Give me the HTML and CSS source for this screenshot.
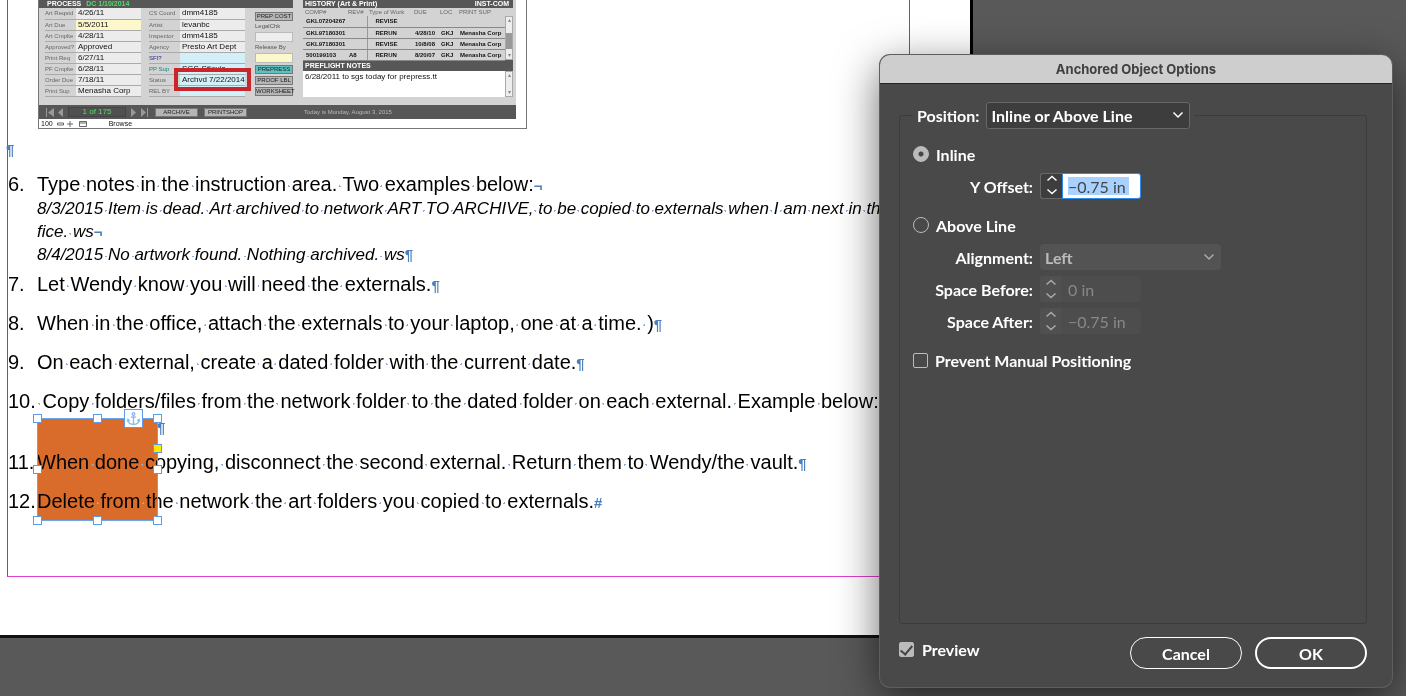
FILE: index.html
```
<!DOCTYPE html>
<html lang="en">
<head>
    <meta charset="utf-8">
    <title>Anchored Object Options</title>
    <link rel="stylesheet" href="styles.css">
</head>
<body>
    <main class="page">
        <div class="frame">
            <div class="shot">
                <div class="shot-main">
                    <div class="process">
                        <div class="bar">PROCESS <span class="green">DC 1/10/2014</span></div>
                        <div class="process-cols">
                            <table class="fields">
                                <tr><th>Art Reqstd</th><td>4/26/11</td></tr>
                                <tr><th>Art Due</th><td class="yellow">5/5/2011</td></tr>
                                <tr><th>Art Cmplte</th><td>4/28/11</td></tr>
                                <tr><th>Approved?</th><td>Approved</td></tr>
                                <tr><th>Print Req</th><td>6/27/11</td></tr>
                                <tr><th>PF Cmplte</th><td>6/28/11</td></tr>
                                <tr><th>Order Due</th><td>7/18/11</td></tr>
                                <tr><th>Print Sup</th><td>Menasha Corp</td></tr>
                            </table>
                            <table class="fields">
                                <tr><th>CS Coord</th><td>dmm4185</td></tr>
                                <tr><th>Artist</th><td>levanbc</td></tr>
                                <tr><th>Inspector</th><td>dmm4185</td></tr>
                                <tr><th>Agency</th><td>Presto Art Dept</td></tr>
                                <tr><th class="navy">SFI?</th><td class="blue"></td></tr>
                                <tr><th class="teal">PP Sup</th><td class="blue">SGS-Stlouis</td></tr>
                                <tr><th>Status</th><td class="blue marked">Archvd 7/22/2014</td></tr>
                                <tr><th>REL BY</th><td class="blue"></td></tr>
                            </table>
                            <div class="actions">
                                <button>PREP COST</button>
                                <label for="legal">LegalChk</label>
                                <input id="legal" type="text">
                                <label for="release">Release By</label>
                                <input id="release" class="yellow" type="text">
                                <button class="teal-btn">PREPRESS</button>
                                <button>PROOF LBL</button>
                                <button>WORKSHEET</button>
                            </div>
                        </div>
                    </div>
                    <div class="history">
                        <div class="bar spaced"><span>HISTORY (Art &amp; Print)</span><span>INST-COM</span></div>
                        <div class="scrolled">
                            <table class="jobs">
                                <thead>
                                    <tr><th class="c1">COMP#</th><th class="c2">REV#</th><th class="c3">Type of Work</th><th class="c4">DUE</th><th class="c5">LOC</th><th>PRINT SUP</th></tr>
                                </thead>
                                <tbody>
                                    <tr><td>GKL07204267</td><td></td><td>REVISE</td><td></td><td></td><td></td></tr>
                                    <tr><td>GKL97180301</td><td></td><td>RERUN</td><td>4/28/10</td><td>GKJ</td><td>Menasha Corp</td></tr>
                                    <tr><td>GKL97180301</td><td></td><td>REVISE</td><td>10/8/08</td><td>GKJ</td><td>Menasha Corp</td></tr>
                                    <tr><td>500199103</td><td>A8</td><td>RERUN</td><td>8/20/07</td><td>GKJ</td><td>Menasha Corp</td></tr>
                                </tbody>
                            </table>
                            <div class="scrollbar"><span>▴</span><b></b><span>▾</span></div>
                        </div>
                        <div class="bar">PREFLIGHT NOTES</div>
                        <div class="notes">
                            <p>6/28/2011 to sgs today for prepress.tt</p>
                            <div class="scrollbar"><span>▴</span><span>▾</span></div>
                        </div>
                    </div>
                </div>
                <div class="shot-nav">
                    <svg width="20" height="9" viewBox="0 0 20 9" fill="#999"><path d="M1 0h1v9H1zM9 0v9L3 4.500zM18 0v9l-5-4.500z"/></svg>
                    <span class="count">1 of 175</span>
                    <svg width="20" height="9" viewBox="0 0 20 9" fill="#999"><path d="M2 0v9l5-4.500zM12 0v9l5-4.500zM18 0h1v9h-1z"/></svg>
                    <button>ARCHIVE</button>
                    <button>PRINTSHOP</button>
                    <span class="today">Today is Monday, August 3, 2015</span>
                </div>
                <div class="shot-status">
                    <span>100</span>
                    <svg width="32" height="8" viewBox="0 0 32 8" fill="none" stroke="#666"><path d="M1.500 3h6v2h-6zM11 4h6M14 1v6M23.500 1.500h7v5h-7zM23.500 3h7"/></svg>
                    <span class="browse">Browse</span>
                </div>
            </div>

            <p class="blank"><span class="mark">¶</span></p>

            <ol class="steps">
                <li>
                    <span class="num">6.</span>
                    <div class="text">
                        <p>Type notes in the instruction area. Two examples below:<span class="mark">¬</span></p>
                        <p class="note">8/3/2015 Item is dead. Art archived to network ART TO ARCHIVE, to be copied to externals when I am next in the of</p>
                        <p class="note">fice. ws<span class="mark">¬</span></p>
                        <p class="note">8/4/2015 No artwork found. Nothing archived. ws<span class="mark">¶</span></p>
                    </div>
                </li>
                <li class="close">
                    <span class="num">7.</span>
                    <p class="text">Let Wendy know you will need the externals.<span class="mark">¶</span></p>
                </li>
                <li>
                    <span class="num">8.</span>
                    <p class="text">When in the office, attach the externals to your laptop, one at a time. )<span class="mark">¶</span></p>
                </li>
                <li>
                    <span class="num">9.</span>
                    <p class="text">On each external, create a dated folder with the current date.<span class="mark">¶</span></p>
                </li>
                <li>
                    <span class="num">10.</span>
                    <div class="text">
                        <p>&nbsp;Copy folders/files from the network folder to the dated folder on each external. Example below:&nbsp;</p>
                        <p class="after-object"><span class="mark">¶</span></p>
                        <div class="object"></div>
                        <div class="selection">
                            <i class="handle nw"></i><i class="handle n"></i><i class="handle ne"></i>
                            <i class="handle w"></i><i class="handle e"></i>
                            <i class="handle sw"></i><i class="handle s"></i><i class="handle se"></i>
                            <i class="handle corner"></i>
                            <svg class="anchor" viewBox="0 0 19 19" fill="none" stroke="#8ab8f0" stroke-width="1.500">
                                <circle cx="9.500" cy="4.500" r="1.500"/>
                                <path d="M9.500 6v10M6.500 8h6M3 11c.5 3.500 3 5 6.500 5s6-1.500 6.500-5M2.500 13l.8-2.500 2 1.500M16.500 13l-.8-2.500-2 1.500"/>
                            </svg>
                        </div>
                    </div>
                </li>
                <li>
                    <span class="num">11.</span>
                    <p class="text">When done copying, disconnect the second external. Return them to Wendy/the vault.<span class="mark">¶</span></p>
                </li>
                <li>
                    <span class="num">12.</span>
                    <p class="text">Delete from the network the art folders you copied to externals.<span class="mark">#</span></p>
                </li>
            </ol>
        </div>
    </main>

    <form class="dialog">
        <h1 class="title">Anchored Object Options</h1>
        <div class="dialog-body">
            <fieldset class="group">
                <legend>
                    <label for="position">Position:</label>
                    <span class="select">
                        <select id="position"><option>Inline or Above Line</option></select>
                        <svg width="12" height="8" viewBox="0 0 12 8"><path d="M1.500 1.500L6 6l4.500-4.500"/></svg>
                    </span>
                </legend>

                <div class="option"><input type="radio" id="inline" name="mode" checked><label for="inline">Inline</label></div>
                <div class="row">
                    <label for="offset">Y Offset:</label>
                    <span class="stepper active">
                        <button type="button" aria-label="Step Y Offset"><svg width="12" height="20" viewBox="0 0 12 20"><path d="M1.500 5.500L6 1.500l4.500 4M1.500 14.500l4.500 4 4.500-4"/></svg></button>
                        <input type="text" id="offset" value="−0.75 in">
                    </span>
                </div>

                <div class="option"><input type="radio" id="above" name="mode"><label for="above">Above Line</label></div>
                <div class="row">
                    <label for="align">Alignment:</label>
                    <span class="select off">
                        <select id="align" disabled><option>Left</option></select>
                        <svg width="12" height="8" viewBox="0 0 12 8"><path d="M1.500 1.500L6 6l4.500-4.500"/></svg>
                    </span>
                </div>
                <div class="row">
                    <label for="before">Space Before:</label>
                    <span class="stepper">
                        <button type="button" aria-label="Step Space Before" disabled><svg width="12" height="20" viewBox="0 0 12 20"><path d="M1.500 5.500L6 1.500l4.500 4M1.500 14.500l4.500 4 4.500-4"/></svg></button>
                        <input type="text" id="before" value="0 in" disabled>
                    </span>
                </div>
                <div class="row">
                    <label for="after">Space After:</label>
                    <span class="stepper">
                        <button type="button" aria-label="Step Space After" disabled><svg width="12" height="20" viewBox="0 0 12 20"><path d="M1.500 5.500L6 1.500l4.500 4M1.500 14.500l4.500 4 4.500-4"/></svg></button>
                        <input type="text" id="after" value="−0.75 in" disabled>
                    </span>
                </div>

                <div class="option"><input type="checkbox" id="prevent"><label for="prevent">Prevent Manual Positioning</label></div>
            </fieldset>

            <div class="footer">
                <div class="preview"><input type="checkbox" id="preview" checked><label for="preview">Preview</label></div>
                <button type="button" class="pill">Cancel</button>
                <button type="submit" class="pill ok">OK</button>
            </div>
        </div>
    </form>
    <script src="script.js"></script>
</body>
</html>
```
FILE: script.js
```
// show every space in the story as a small dot
document.querySelectorAll('.steps p').forEach((p) => {
    p.innerHTML = p.innerHTML.replace(/(<[^>]+>)|(&nbsp;| )/g, (all, tag) =>
        tag ? tag : '<span class="space">' + all + '</span>');
});
```
FILE: styles.css
```
* {
    box-sizing: border-box;
}
body {
    margin: 0;
    min-height: 100vh;
    background-color: #595959;
    font-family: "Liberation Sans", Arial, sans-serif;
    overflow: hidden;
}
p, ol, h1 {
    margin: 0;
    padding: 0;
}
.page {
    width: calc(69vw + 3px);
    padding: 0 60px 58px 7px;
    border-right: 3px solid #000;
    border-bottom: 3px solid #111;
    background-color: #fff;
}
.frame {
    padding-bottom: 62px;
    border-left: 1px solid #9333e0;
    border-right: 1px solid #9333e0;
    border-bottom: 1px solid #e040d0;
}

/* placed picture of the job database */
.shot {
    width: 489px;
    margin-left: 30px;
    border: 1px solid #777;
    border-top: 0;
    font-size: 7px;
    line-height: 8px;
    color: #111;
    white-space: nowrap;
    overflow: hidden;
}
.shot-main {
    display: flex;
    gap: 10px;
    width: 477px;
    height: 105px;
    padding-right: 3px;
    background-color: #d2d3d2;
}
.process {
    width: 254px;
}
.history {
    flex: 1;
}
.bar {
    height: 8px;
    padding-left: 8px;
    background-color: #575757;
    color: #fff;
    font-weight: bold;
    line-height: 8px;
}
.history .bar {
    padding: 0 4px 0 2px;
}
.history .bar:not(.spaced) {
    height: 11px;
    line-height: 11px;
}
.spaced {
    display: flex;
    justify-content: space-between;
}
.green {
    margin-left: 3px;
    color: #4be05f;
}
.process-cols {
    display: flex;
    gap: 8px;
    padding-left: 6px;
}
.fields {
    border-collapse: collapse;
    table-layout: fixed;
    width: 96px;
}
.fields th, .fields td {
    height: 11px;
    padding: 0;
    border-bottom: 1px solid #aaa;
    line-height: 10px;
    text-align: left;
}
.fields th {
    width: 31px;
    color: #666;
    font-size: 6px;
    font-weight: normal;
}
.fields td {
    padding-left: 2px;
    background-color: #ececec;
    font-size: 8px;
}
.fields td.blue {
    background-color: #d3f0f8;
}
.fields td.marked {
    outline: 4px solid #c9252c;
    outline-offset: 2px;
}
.fields .navy {
    color: #22229a;
}
.fields .teal {
    color: #11888c;
}
.fields td.yellow, .actions input.yellow {
    background-color: #fdf8cc;
}
.actions {
    display: flex;
    flex-direction: column;
    gap: 2px;
    width: 38px;
    margin-left: 2px;
    padding-top: 4px;
    font-size: 6px;
    color: #555;
}
.actions label {
    height: 7px;
    line-height: 7px;
}
.actions input {
    width: 100%;
    height: 10px;
    padding: 0;
    border: 1px solid #bbb;
    background-color: #eee;
}
.shot button {
    height: 9px;
    padding: 0;
    border: 1px solid #777;
    background-color: #b5b5b5;
    color: #222;
    font: 6px "Liberation Sans", Arial, sans-serif;
    line-height: 7px;
}
.shot .teal-btn {
    background-color: #5fc0c0;
}
.scrolled {
    display: flex;
    height: 52px;
}
.jobs {
    flex: 1;
    table-layout: fixed;
    border-collapse: collapse;
    font-size: 6px;
}
.jobs th {
    height: 8px;
    padding: 0 0 0 2px;
    color: #666;
    font-weight: normal;
    line-height: 8px;
    text-align: left;
}
.jobs td {
    height: 11px;
    padding: 0 0 0 3px;
    border-bottom: 1px solid #888;
    font-weight: bold;
    line-height: 10px;
}
.jobs td:nth-child(2) {
    border-right: 1px solid #999;
}
.jobs td:nth-child(3) {
    padding-left: 8px;
}
.c1 { width: 43px; }
.c2 { width: 21px; }
.c3 { width: 45px; }
.c4 { width: 26px; }
.c5 { width: 19px; }
.scrollbar {
    display: flex;
    flex-direction: column;
    justify-content: space-between;
    width: 8px;
    border: 1px solid #aaa;
    background-color: #eee;
    color: #888;
    font-size: 6px;
    line-height: 7px;
    text-align: center;
}
.scrolled .scrollbar {
    margin-top: 8px;
}
.scrollbar b {
    height: 16px;
    margin-top: 6px;
    background-color: #999;
}
.notes {
    display: flex;
    height: 26px;
    background-color: #fff;
    font-size: 8px;
}
.notes p {
    flex: 1;
    padding: 2px;
}
.shot-nav {
    display: flex;
    align-items: center;
    width: 477px;
    height: 14px;
    padding-left: 6px;
    background-color: #575757;
    color: #bbb;
    font-size: 6px;
}
.count {
    width: 58px;
    margin: 0 3px;
    border: 1px solid #444;
    background-color: #505050;
    color: #4be05f;
    font-size: 8px;
    text-align: center;
}
.shot-nav button {
    width: 43px;
    margin-left: 6px;
}
.today {
    margin-left: 57px;
}
.shot-status {
    display: flex;
    align-items: center;
    gap: 3px;
    height: 9px;
    padding-left: 2px;
}
.browse {
    margin-left: 18px;
}

/* story text */
.blank {
    height: 43px;
    padding-top: 9px;
    font-size: 20px;
    line-height: 20px;
}
.blank .mark {
    margin-left: -2px;
}
.steps {
    list-style: none;
    font-size: 20px;
    line-height: 25px;
    white-space: nowrap;
}
.steps li {
    display: flex;
    margin-top: 14px;
}
.steps li:first-child {
    margin-top: 0;
}
.steps li.close {
    margin-top: 6px;
}
.num {
    width: 29px;
    flex: none;
}
.text {
    position: relative;
}
.note {
    font-size: 17px;
    font-style: italic;
    line-height: 23px;
}
.mark {
    color: #4a80bd;
    font-size: 15px;
    font-style: normal;
    font-weight: bold;
    line-height: 1;
}
.space {
    background: radial-gradient(circle, #86aede 1px, transparent 1px) center 12px / 3px 3px no-repeat;
}
.note .space {
    background-position: center 10px;
}
.after-object {
    height: 22px;
    padding-left: 120px;
}
.object, .selection {
    position: absolute;
    top: 29px;
    left: 0;
    width: 121px;
    height: 103px;
}
.object {
    background-color: #d96b2b;
    mix-blend-mode: multiply;
}
.selection {
    z-index: 1;
    border: 1px solid #6aa5ee;
}
.handle {
    position: absolute;
    width: 9px;
    height: 9px;
    border: 1px solid #5b9bee;
    background-color: #fff;
}
.nw, .n, .ne { top: -5px; }
.w, .e { top: 46px; }
.sw, .s, .se { bottom: -5px; }
.nw, .w, .sw { left: -5px; }
.n, .s { left: 55px; }
.ne, .e, .se, .corner { right: -5px; }
.corner {
    top: 25px;
    background-color: #ffe600;
}
.anchor {
    position: absolute;
    top: -10px;
    left: 86px;
    width: 19px;
    height: 19px;
    border: 1px solid #5b9bee;
    background-color: #fff;
}

/* dialog */
.dialog {
    position: absolute;
    top: 55px;
    right: 14px;
    z-index: 2;
    width: 512px;
    border-radius: 10px;
    background-color: #494949;
    box-shadow: 0 0 0 1px #5e5e5e, 0 12px 44px rgba(0, 0, 0, 0.6);
    color: #fff;
    font-family: Lato, "Open Sans", sans-serif;
    font-size: 16px;
    font-weight: bold;
    overflow: hidden;
}
.title {
    height: 29px;
    border-bottom: 1px solid #222;
    background-color: #cecece;
    color: #404040;
    font: bold 13px Inter, sans-serif;
    line-height: 28px;
    text-align: center;
}
.dialog-body {
    padding: 18px 25px 18px 19px;
}
.group {
    min-width: 0;
    height: 522px;
    margin: 0;
    padding: 12px 13px;
    border: 1px solid #3c3c3c;
    border-radius: 3px;
}
legend {
    display: flex;
    align-items: center;
    gap: 7px;
    padding: 0 4px;
}
.select {
    position: relative;
    display: block;
}
.select select {
    appearance: none;
    width: 204px;
    height: 27px;
    padding: 0 4px;
    border: 1px solid #686868;
    border-radius: 3px;
    background-color: #3d3d3d;
    color: #fff;
    font: inherit;
    opacity: 1;
}
.select svg {
    position: absolute;
    top: 9px;
    right: 6px;
}
.dialog path {
    fill: none;
    stroke: #fff;
    stroke-width: 1.5px;
}
.select.off select {
    width: 181px;
    border-color: #535353;
    background-color: #535353;
    color: #bbb;
}
.off path, button:disabled path {
    stroke: #aaa;
}
.option {
    display: flex;
    align-items: center;
    gap: 7px;
    height: 26px;
}
.row {
    display: flex;
    align-items: center;
    gap: 7px;
    height: 26px;
    margin: 6px 0;
}
.row > label {
    width: 120px;
    text-align: right;
}
.row .select select {
    height: 26px;
}
.row + .option {
    margin-top: 13px;
}
.option input, .preview input {
    appearance: none;
    width: 15px;
    height: 15px;
    margin: 0;
    border: 1px solid #bbb;
    border-radius: 2px;
}
.option input[type="radio"] {
    width: 16px;
    height: 16px;
    border-radius: 50%;
}
.option input[type="radio"]:checked {
    background: radial-gradient(circle, #444 2px, #bbb 3px);
}
.stepper {
    display: flex;
    width: 101px;
    height: 26px;
}
.stepper button {
    width: 22px;
    padding: 2px 0 0;
    border: 0;
    border-radius: 3px 0 0 3px;
    background-color: #505050;
}
.stepper input {
    width: 79px;
    padding: 0 6px;
    border: 0;
    border-radius: 0 3px 3px 0;
    background-color: #4d4d4d;
    color: #888;
    font: inherit;
    font-weight: normal;
}
.stepper.active button {
    border: 1px solid #686868;
    border-right: 0;
    background-color: #3d3d3d;
    padding-top: 1px;
}
.stepper.active input {
    padding: 0 5px;
    border: 1px solid #2d8ceb;
    background: #fff linear-gradient(#a9d1ff, #a9d1ff) 5px 3px / 61px 18px no-repeat;
    color: #444;
}
.footer {
    display: flex;
    align-items: center;
    gap: 13px;
    margin-top: 13px;
}
.preview {
    display: flex;
    align-items: center;
    gap: 8px;
    margin: 0 auto 7px 0;
}
.preview input:checked {
    display: grid;
    justify-content: center;
    border-color: #bbb;
    background-color: #bbb;
}
/* tick */
.preview input:checked::before {
    content: "";
    width: 5px;
    height: 10px;
    border: solid #444;
    border-width: 0 2px 2px 0;
    transform: rotate(40deg);
}
.pill {
    width: 112px;
    height: 32px;
    border: 1px solid #fff;
    border-radius: 16px;
    background-color: transparent;
    color: #fff;
    font: inherit;
}
.ok {
    border-width: 2px;
}
```
